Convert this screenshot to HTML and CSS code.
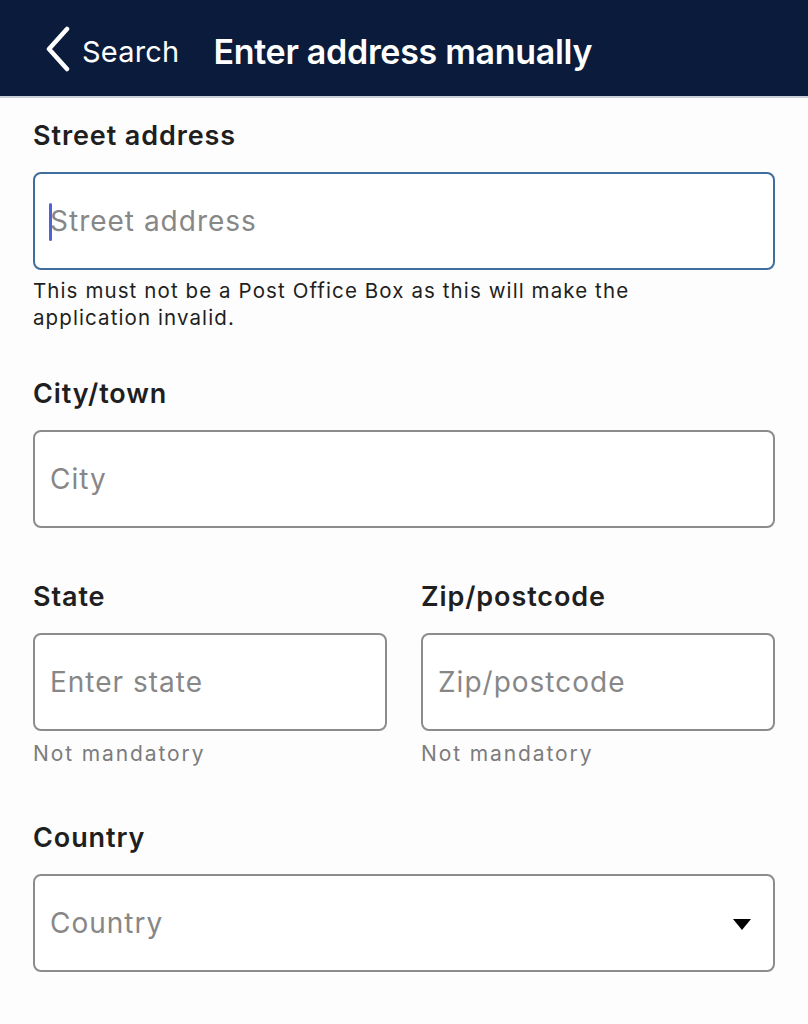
FILE: index.html
```html
<!DOCTYPE html>
<html lang="en">
<head>
<meta charset="utf-8">
<title>Enter address manually</title>
<link rel="stylesheet" href="styles.css">
</head>
<body>
<header class="topbar">
  <div class="back">
    <svg class="chev" width="28" height="46" viewBox="0 0 28 46"><path d="M23 3 L5 23 L23 43" fill="none" stroke="#fff" stroke-width="4.5" stroke-linecap="round" stroke-linejoin="round"/></svg>
    <span class="back-text">Search</span>
  </div>
  <h1 class="title">Enter address manually</h1>
</header>
<main class="form">
  <section class="group g-street">
    <div class="label">Street address</div>
    <div class="input focused"><span class="caret"></span><span class="ph">Street address</span></div>
    <p class="help">This must not be a Post Office Box as this will make the application invalid.</p>
  </section>
  <section class="group g-city">
    <div class="label">City/town</div>
    <div class="input"><span class="ph">City</span></div>
  </section>
  <section class="row">
    <div class="group col">
      <div class="label">State</div>
      <div class="input"><span class="ph">Enter state</span></div>
      <div class="note">Not mandatory</div>
    </div>
    <div class="group col">
      <div class="label">Zip/postcode</div>
      <div class="input"><span class="ph">Zip/postcode</span></div>
      <div class="note">Not mandatory</div>
    </div>
  </section>
  <section class="group g-country">
    <div class="label">Country</div>
    <div class="input select"><span class="ph">Country</span><span class="tri"></span></div>
  </section>
</main>
</body>
</html>
```
FILE: styles.css
```css
* { box-sizing: border-box; }
html, body { margin: 0; padding: 0; }
body {
  background: #fdfdfd;
  font-family: Inter, "Noto Sans", "Liberation Sans", sans-serif;
  color: #1c1c1e;
  width: 808px;
  height: 1024px;
  overflow: hidden;
}
.topbar {
  height: 98px;
  background: #0b1b3b;
  border-bottom: 2px solid #c9ced8;
  display: flex;
  align-items: center;
  padding-left: 44px;
  padding-top: 6px;
}
.back {
  display: flex;
  align-items: center;
  gap: 10px;
  margin-right: 34px;
}
.chev { display: block; margin-top: -4px; }
.back-text {
  color: #fff;
  font-size: 29px;
  letter-spacing: 0.2px;
}
.title {
  margin: 0;
  color: #fff;
  font-size: 34px;
  font-weight: 600;
  letter-spacing: -0.3px;
}
.form {
  padding: 22px 33px 0 33px;
}
.label {
  font-size: 27px;
  font-weight: 600;
  line-height: 32px;
  margin-bottom: 20px;
  color: #1f1f21;
  letter-spacing: 0.9px;
}
.input {
  height: 98px;
  border: 2px solid #8c8c8c;
  border-radius: 8px;
  background: #fff;
  display: flex;
  align-items: center;
  padding-left: 15px;
  padding-right: 22px;
  position: relative;
}
.input.focused { border-color: #3f6d9c; }
.ph {
  font-size: 28px;
  color: #878787;
  letter-spacing: 1px;
}
.caret {
  position: absolute;
  left: 14px;
  top: 29px;
  width: 3px;
  height: 38px;
  background: #4d63d6;
  border-radius: 2px;
}
.help {
  margin: 7px 0 0 0;
  font-size: 20.5px;
  line-height: 27px;
  color: #1f1f21;
  letter-spacing: 1.1px;
  max-width: 660px;
}
.g-city { margin-top: 47px; }
.row {
  margin-top: 53px;
  display: grid;
  grid-template-columns: 1fr 1fr;
  column-gap: 34px;
}
.note {
  margin-top: 9px;
  font-size: 21px;
  line-height: 27px;
  color: #7c7c7c;
  letter-spacing: 1.9px;
}
.g-country { margin-top: 55px; }
.select { justify-content: space-between; }
.tri {
  width: 0; height: 0;
  border-left: 9px solid transparent;
  border-right: 9px solid transparent;
  border-top: 11px solid #000;
  margin-top: 2px;
}
```
